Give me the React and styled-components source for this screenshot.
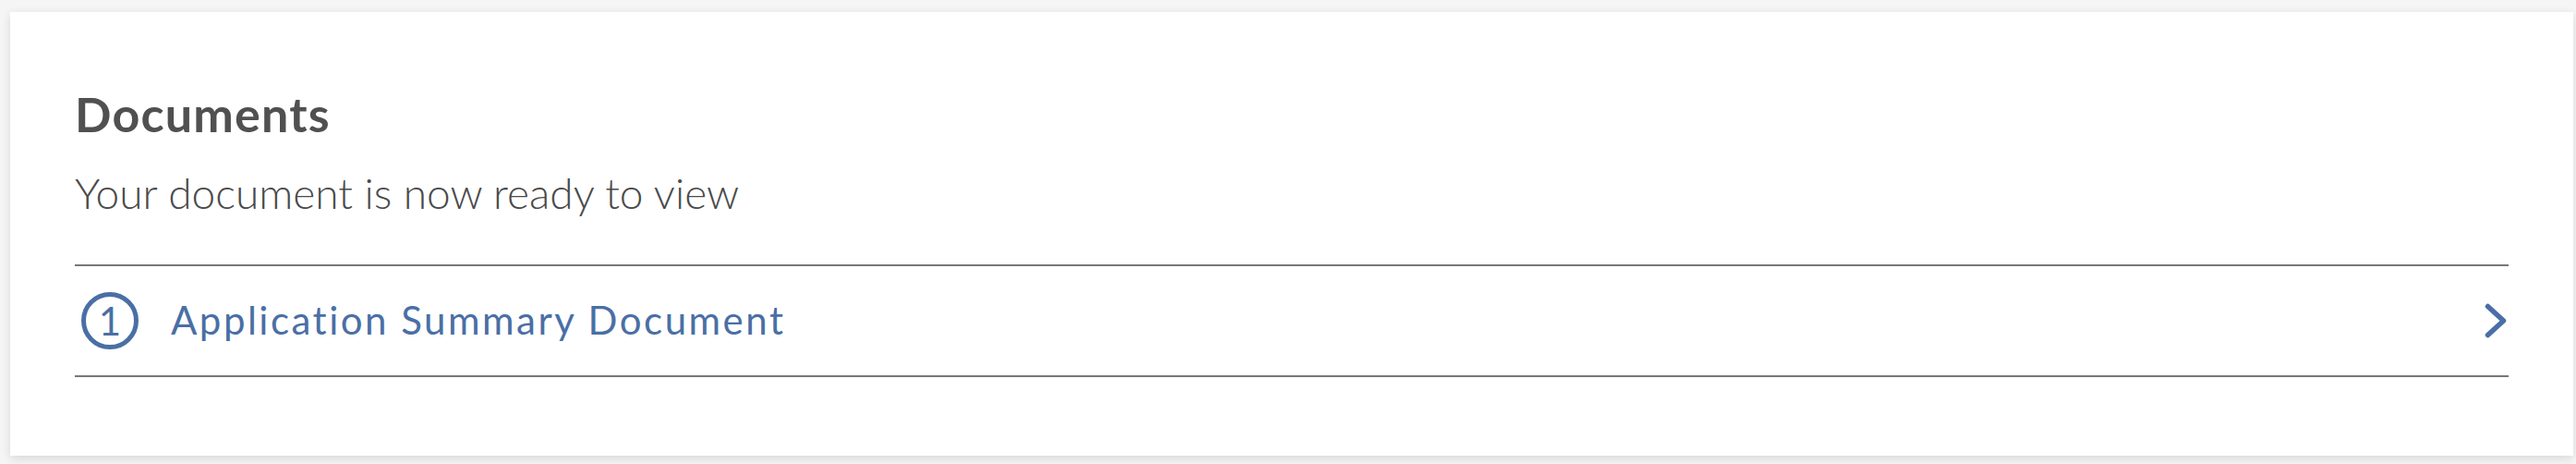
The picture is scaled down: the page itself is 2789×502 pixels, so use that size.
import React from 'react';
import styled, { createGlobalStyle } from 'styled-components';

const GlobalStyle = createGlobalStyle`
  html, body {
    margin: 0;
    padding: 0;
    background: #f5f5f5;
  }
  body {
    font-family: Lato, "Noto Sans", sans-serif;
  }
`;

const Page = styled.div`
  padding: 13px 3px 10px 11px;
`;

const Card = styled.section`
  background: #ffffff;
  padding: 79px 70px 85px 70px;
  box-shadow: 0 3px 10px rgba(0, 0, 0, 0.12);
`;

const Title = styled.h2`
  margin: 0;
  font-size: 52px;
  line-height: 1.2;
  font-weight: 700;
  letter-spacing: 1.2px;
  color: #505050;
`;

const Subtitle = styled.p`
  margin: 27px 0 49px 0;
  font-size: 46px;
  line-height: 1.2;
  font-weight: 300;
  color: #4a4a4a;
`;

const DocList = styled.ul`
  list-style: none;
  margin: 0;
  padding: 0;
`;

const DocRow = styled.li`
  display: flex;
  align-items: center;
  height: 118px;
  border-top: 2px solid #777777;
  border-bottom: 2px solid #777777;
  color: #4a6fa5;
  cursor: pointer;
`;

const Number = styled.span`
  display: flex;
  align-items: center;
  justify-content: center;
  box-sizing: border-box;
  width: 62px;
  height: 62px;
  margin-left: 7px;
  border: 5px solid #4a6fa5;
  border-radius: 50%;
  font-size: 42px;
  line-height: 1;
  font-weight: 400;
`;

const DocName = styled.span`
  flex: 1;
  margin-left: 35px;
  font-size: 42px;
  line-height: 1.2;
  font-weight: 400;
  letter-spacing: 2.5px;
`;

const Chevron = styled.svg`
  width: 24px;
  height: 38px;
  margin-right: 2px;
`;

const documents = [{ id: 1, name: 'Application Summary Document' }];

export default function App() {
  return (
    <Page>
      <GlobalStyle />
      <Card>
        <Title>Documents</Title>
        <Subtitle>Your document is now ready to view</Subtitle>
        <DocList>
          {documents.map((doc) => (
            <DocRow key={doc.id}>
              <Number>{doc.id}</Number>
              <DocName>{doc.name}</DocName>
              <Chevron viewBox="0 0 24 38" fill="none">
                <polyline
                  points="3.5,3.5 20.5,19 3.5,34.5"
                  stroke="#4a6fa5"
                  strokeWidth="5.5"
                  strokeLinecap="round"
                  strokeLinejoin="round"
                />
              </Chevron>
            </DocRow>
          ))}
        </DocList>
      </Card>
    </Page>
  );
}
